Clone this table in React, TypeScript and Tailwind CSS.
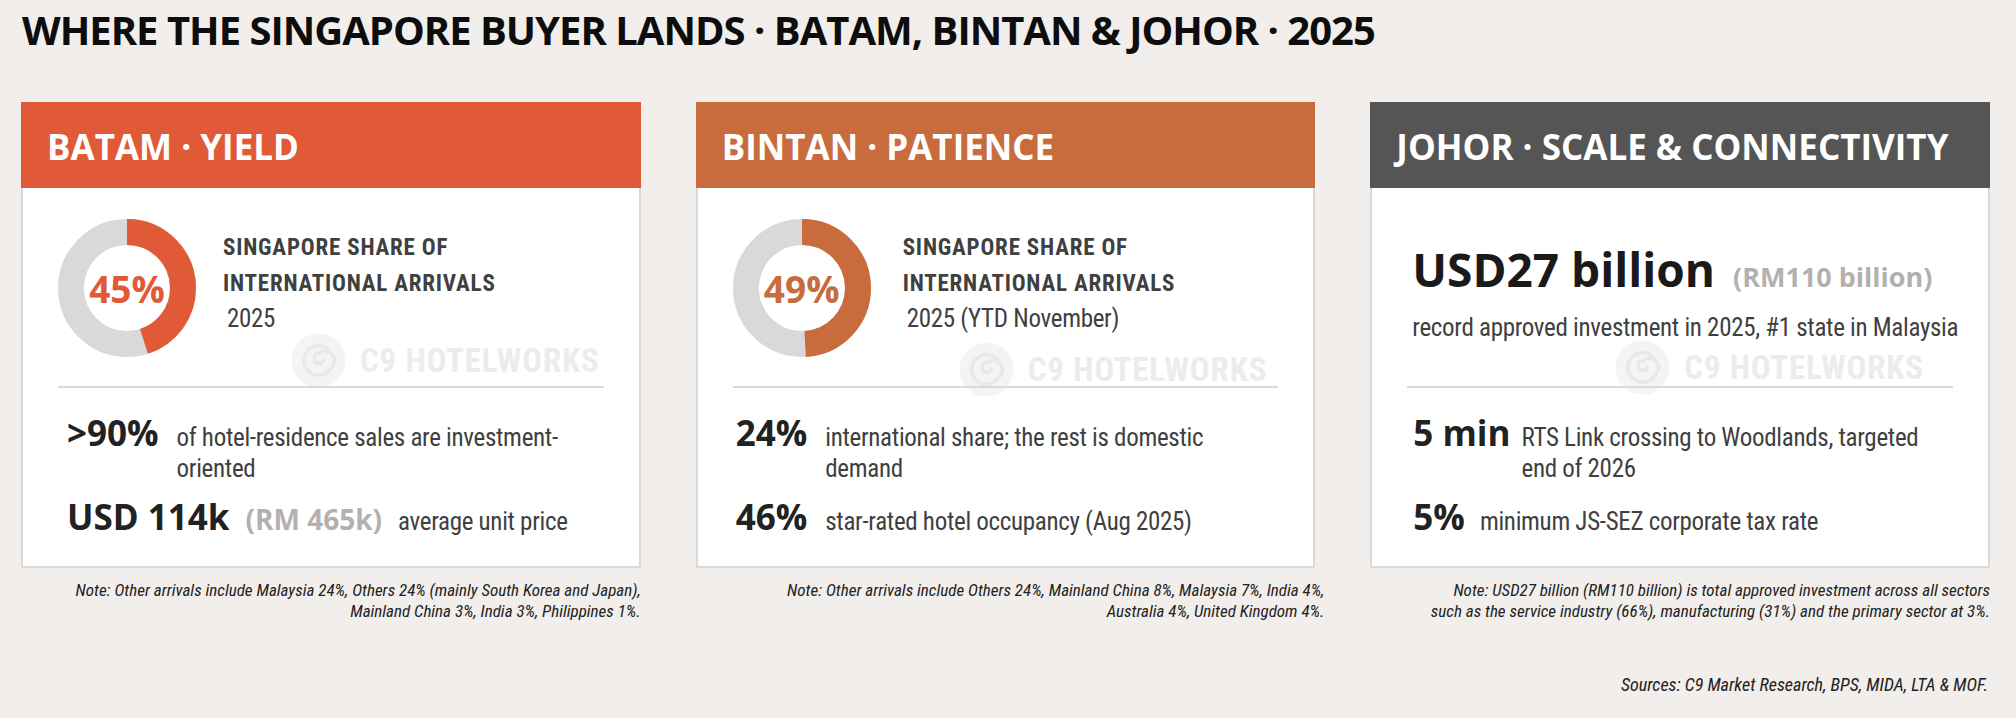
import React from 'react';

const narrow = "font-['Roboto',sans-serif] font-stretch-condensed";
const heavy = "font-['Open_Sans',sans-serif] font-bold";

const Donut = ({ pct, color }: { pct: number; color: string }) => {
  const r = 56;
  const c = 2 * Math.PI * r;
  return (
    <div className="relative w-[138px] h-[138px] shrink-0">
      <svg width="138" height="138" viewBox="0 0 138 138">
        <circle cx="69" cy="69" r={r} fill="none" stroke="#d9d9d9" strokeWidth="26" />
        <circle
          cx="69"
          cy="69"
          r={r}
          fill="none"
          stroke={color}
          strokeWidth="26"
          strokeDasharray={`${(c * pct) / 100} ${c}`}
          transform="rotate(-90 69 69)"
        />
      </svg>
      <div
        className={`absolute inset-0 flex items-center justify-center text-[37px] leading-none ${heavy}`}
        style={{ color }}
      >
        {pct}%
      </div>
    </div>
  );
};

// faint company mark behind the divider
const Watermark = ({ className }: { className: string }) => (
  <div className={`absolute flex items-center gap-[14px] pointer-events-none ${className}`}>
    <svg width="55" height="55" viewBox="0 0 56 56">
      <circle cx="28" cy="28" r="27.5" fill="#f4f4f4" />
      <path
        d="M39.5 18.4 A15 15 0 1 0 41 35.5 A8.5 8.5 0 1 0 28 21 A5 5 0 1 0 33 28"
        fill="none"
        stroke="#e8e8e8"
        strokeWidth="3.5"
        strokeLinecap="round"
      />
    </svg>
    <span className={`text-[33px] leading-none font-bold tracking-[0.8px] whitespace-nowrap text-[#ececec] ${narrow}`}>
      C9 HOTELWORKS
    </span>
  </div>
);

const Share = ({ sub }: { sub: string }) => (
  <div className={`mt-[11px] text-[#404040] ${narrow}`}>
    <p className="text-[23px] leading-[36px] font-bold tracking-[0.8px] whitespace-nowrap">SINGAPORE SHARE OF</p>
    <p className="text-[23px] leading-[36px] font-bold tracking-[0.8px] whitespace-nowrap">INTERNATIONAL ARRIVALS</p>
    <p className="mt-[2px] pl-[4px] text-[25px] leading-[30px] tracking-[-0.3px]">{sub}</p>
  </div>
);

const Stat = ({ value, gap, children }: { value: React.ReactNode; gap: string; children: React.ReactNode }) => (
  <div className={`flex items-baseline ${gap}`}>
    <span className={`text-[35px] leading-none text-[#222] whitespace-nowrap ${heavy}`}>{value}</span>
    <p className={`text-[25px] leading-[31px] tracking-[-0.3px] text-[#404040] whitespace-nowrap ${narrow}`}>{children}</p>
  </div>
);

const Card = ({
  title,
  headerBg,
  top,
  stats,
  statsPad,
  note,
  noteClass,
}: {
  title: string;
  headerBg: string;
  top: React.ReactNode;
  stats: React.ReactNode;
  statsPad: string;
  note: React.ReactNode;
  noteClass: string;
}) => (
  <div className="flex flex-col">
    <div className={`h-[86px] flex items-center pl-[26px] pt-[2px] ${headerBg}`}>
      <h2 className={`text-[35px] leading-none text-white whitespace-nowrap ${heavy}`}>{title}</h2>
    </div>
    <div className="h-[380px] bg-white border-2 border-t-0 border-[#d9d9d9] flex flex-col">
      <div className="relative h-[198px]">{top}</div>
      <div className="relative h-[2px] mx-[35px] bg-[#d9d9d9]" />
      <div className={`relative pt-[27px] flex flex-col gap-[15px] ${statsPad}`}>{stats}</div>
    </div>
    <p className={`mt-[12px] text-right text-[17px] leading-[21px] italic text-[#222] whitespace-nowrap ${narrow} ${noteClass}`}>
      {note}
    </p>
  </div>
);

export default function App() {
  return (
    <div className="relative w-[2016px] h-[718px] bg-[#f1eeeb] overflow-hidden">
      <h1 className={`pl-[22px] pt-[10px] text-[40px] leading-[40px] tracking-[-1px] text-[#0d0d0d] whitespace-nowrap ${heavy}`}>
        WHERE THE SINGAPORE BUYER LANDS · BATAM, BINTAN &amp; JOHOR · 2025
      </h1>

      <div className="grid grid-cols-3 gap-[55px] pl-[21px] pr-[26px] mt-[52px]">
        <Card
          title="BATAM · YIELD"
          headerBg="bg-[#e05a38]"
          top={
            <>
              <Watermark className="left-[268px] top-[145px]" />
              <div className="relative flex items-start pl-[35px] pt-[31px] gap-[27px]">
                <Donut pct={45} color="#e05a38" />
                <Share sub="2025" />
              </div>
            </>
          }
          statsPad="pl-[44px]"
          stats={
            <>
              <Stat value=">90%" gap="gap-[18px]">
                of hotel-residence sales are investment-
                <br />
                oriented
              </Stat>
              <div className="flex items-baseline gap-[16px]">
                <span className={`text-[35px] leading-none text-[#222] ${heavy}`}>USD 114k</span>
                <span className={`text-[28px] leading-none text-[#b3b0ae] ${heavy}`}>(RM 465k)</span>
                <span className={`text-[25px] leading-[31px] tracking-[-0.3px] text-[#404040] ${narrow}`}>average unit price</span>
              </div>
            </>
          }
          note={
            <>
              Note: Other arrivals include Malaysia 24%, Others 24% (mainly South Korea and Japan),
              <br />
              Mainland China 3%, India 3%, Philippines 1%.
            </>
          }
          noteClass=""
        />

        <Card
          title="BINTAN · PATIENCE"
          headerBg="bg-[#c86c3e]"
          top={
            <>
              <Watermark className="left-[261px] top-[154px]" />
              <div className="relative flex items-start pl-[35px] pt-[31px] gap-[32px]">
                <Donut pct={49} color="#c86c3e" />
                <Share sub="2025 (YTD November)" />
              </div>
            </>
          }
          statsPad="pl-[38px]"
          stats={
            <>
              <Stat value="24%" gap="gap-[18px]">
                international share; the rest is domestic
                <br />
                demand
              </Stat>
              <Stat value="46%" gap="gap-[18px]">
                star-rated hotel occupancy (Aug 2025)
              </Stat>
            </>
          }
          note={
            <>
              Note: Other arrivals include Others 24%, Mainland China 8%, Malaysia 7%, India 4%,
              <br />
              Australia 4%, United Kingdom 4%.
            </>
          }
          noteClass="-mr-[9px]"
        />

        <Card
          title="JOHOR · SCALE & CONNECTIVITY"
          headerBg="bg-[#555555]"
          top={
            <>
              <Watermark className="left-[243px] top-[152px]" />
              <div className="relative pl-[40px] pt-[58px]">
                <p className="flex items-baseline gap-[18px]">
                  <span className={`text-[46px] leading-none text-[#1a1a1a] ${heavy}`}>USD27 billion</span>
                  <span className={`text-[27px] leading-none text-[#b3b0ae] ${heavy}`}>(RM110 billion)</span>
                </p>
                <p className={`mt-[21px] text-[25px] leading-[30px] tracking-[-0.3px] text-[#404040] whitespace-nowrap ${narrow}`}>
                  record approved investment in 2025, #1 state in Malaysia
                </p>
              </div>
            </>
          }
          statsPad="pl-[41px]"
          stats={
            <>
              <Stat value="5 min" gap="gap-[11px]">
                RTS Link crossing to Woodlands, targeted
                <br />
                end of 2026
              </Stat>
              <Stat value="5%" gap="gap-[15px]">
                minimum JS-SEZ corporate tax rate
              </Stat>
            </>
          }
          note={
            <>
              Note: USD27 billion (RM110 billion) is total approved investment across all sectors
              <br />
              such as the service industry (66%), manufacturing (31%) and the primary sector at 3%.
            </>
          }
          noteClass=""
        />
      </div>

      <p className={`mt-[52px] pr-[28px] text-right text-[18px] leading-[21px] italic text-[#222] ${narrow}`}>
        Sources: C9 Market Research, BPS, MIDA, LTA &amp; MOF.
      </p>
    </div>
  );
}
